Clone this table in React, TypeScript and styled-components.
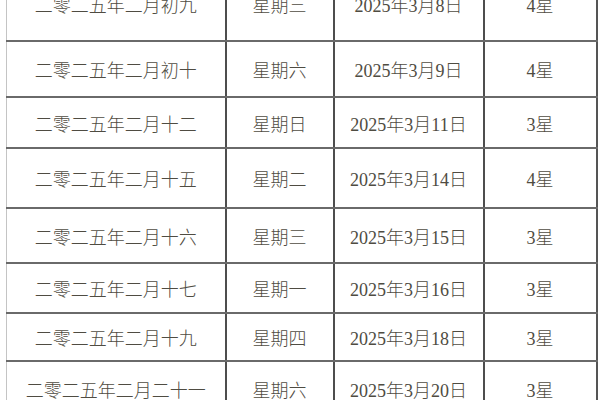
import React from "react";
import styled, { createGlobalStyle } from "styled-components";

const GlobalStyle = createGlobalStyle`
  html, body {
    margin: 0;
    padding: 0;
    background: #ffffff;
    overflow: hidden;
  }
  body {
    font-family: "Liberation Serif", "Noto Sans CJK SC", serif;
  }
`;

const Page = styled.div`
  width: 600px;
  height: 400px;
  overflow: hidden;
  padding-left: 6px;
  box-sizing: border-box;
`;

const Table = styled.table`
  width: 590px;
  margin-top: -33px;
  border-collapse: collapse;
  table-layout: fixed;
  border-left: 1px solid #c4c4c4;
  border-right: 2px solid #555555;
`;

const Col = styled.col<{ $w: number }>`
  width: ${(p) => p.$w}px;
`;

const Row = styled.tr<{ $h: number }>`
  height: ${(p) => p.$h}px;
`;

const Cell = styled.td`
  padding: 0;
  text-align: center;
  vertical-align: middle;
  font-size: 18px;
  font-weight: 300;
  color: #4f4c42;
  border-bottom: 2px solid #6a6a6a;
  border-right: 2px solid #4e4e4e;
  white-space: nowrap;
  &:last-child {
    border-right: none;
  }
`;

type Item = { lunar: string; week: string; date: string; star: string; h: number };

const widths = [219, 108, 150, 113];

const rows: Item[] = [
  { lunar: "二零二五年二月初九", week: "星期三", date: "2025年3月8日", star: "4星", h: 74 },
  { lunar: "二零二五年二月初十", week: "星期六", date: "2025年3月9日", star: "4星", h: 56 },
  { lunar: "二零二五年二月十二", week: "星期日", date: "2025年3月11日", star: "3星", h: 51 },
  { lunar: "二零二五年二月十五", week: "星期二", date: "2025年3月14日", star: "4星", h: 60 },
  { lunar: "二零二五年二月十六", week: "星期三", date: "2025年3月15日", star: "3星", h: 55 },
  { lunar: "二零二五年二月十七", week: "星期一", date: "2025年3月16日", star: "3星", h: 50 },
  { lunar: "二零二五年二月十九", week: "星期四", date: "2025年3月18日", star: "3星", h: 48 },
  { lunar: "二零二五年二月二十一", week: "星期六", date: "2025年3月20日", star: "3星", h: 56 },
];

const App: React.FC = () => {
  return (
    <>
      <GlobalStyle />
      <Page>
        <Table>
          <colgroup>
            {widths.map((w, i) => (
              <Col key={i} $w={w} />
            ))}
          </colgroup>
          <tbody>
            {rows.map((r) => (
              <Row key={r.date} $h={r.h}>
                <Cell>{r.lunar}</Cell>
                <Cell>{r.week}</Cell>
                <Cell>{r.date}</Cell>
                <Cell>{r.star}</Cell>
              </Row>
            ))}
          </tbody>
        </Table>
      </Page>
    </>
  );
};

export default App;
